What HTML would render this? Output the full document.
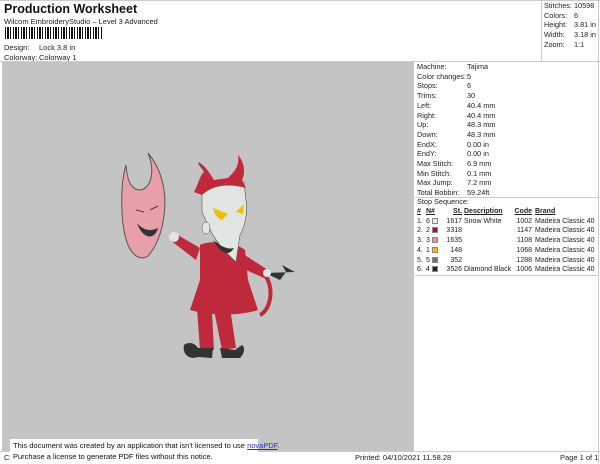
<!DOCTYPE html>
<html><head><style>
*{margin:0;padding:0;box-sizing:border-box}
body{width:600px;height:464px;background:#fff;font-family:"Liberation Sans",Arial,sans-serif;font-size:7.5px;color:#222;position:relative;overflow:hidden}
.a{position:absolute;white-space:nowrap}
.gray{position:absolute;left:2px;top:62px;width:412px;height:390px;background:#c4c4c4}
.bc{position:absolute;left:5px;top:27px;width:97px;height:12px;background:repeating-linear-gradient(90deg,#111 0 1px,#fff 1px 2px,#111 2px 4px,#fff 4px 5px,#111 5px 6px,#fff 6px 8px)}
table{border-collapse:collapse}
td{padding:0;height:9.7px;line-height:9.7px;font-size:7.3px;white-space:nowrap}
.ss td{font-size:7px}
.sw{display:inline-block;width:6px;height:6px;border:1px solid #888;vertical-align:-1px}
</style></head><body>
<div style="position:absolute;left:0;top:0;width:600px;height:1px;background:#ccc"></div>
<div class="a" style="left:4px;top:2px;font-size:12.5px;font-weight:bold;color:#111">Production Worksheet</div>
<div class="a" style="left:4px;top:17px">Wilcom EmbroideryStudio – Level 3 Advanced</div>
<div class="bc"></div>
<div class="a" style="left:4px;top:43px">Design:</div><div class="a" style="left:39px;top:43px">Lock 3.8 in</div>
<div class="a" style="left:4px;top:53px">Colorway:</div><div class="a" style="left:39px;top:53px">Colorway 1</div>
<div style="position:absolute;left:541px;top:1px;width:1px;height:60px;background:#ccc"></div>
<div style="position:absolute;left:598px;top:1px;width:1px;height:462px;background:#ccc"></div>
<table class="a" style="left:544px;top:1px"><tr><td style="width:30px">Stitches:</td><td>10598</td></tr><tr><td>Colors:</td><td>6</td></tr><tr><td>Height:</td><td>3.81 in</td></tr><tr><td>Width:</td><td>3.18 in</td></tr><tr><td>Zoom:</td><td>1:1</td></tr></table>
<div style="position:absolute;left:0;top:61px;width:600px;height:1px;background:#ccc"></div>
<div class="gray"></div>
<table class="a" style="left:417px;top:62px">
<tr><td style="width:50px">Machine:</td><td>Tajima</td></tr>
<tr><td>Color changes:</td><td>5</td></tr><tr><td>Stops:</td><td>6</td></tr><tr><td>Trims:</td><td>30</td></tr>
<tr><td>Left:</td><td>40.4 mm</td></tr><tr><td>Right:</td><td>40.4 mm</td></tr><tr><td>Up:</td><td>48.3 mm</td></tr><tr><td>Down:</td><td>48.3 mm</td></tr>
<tr><td>EndX:</td><td>0.00 in</td></tr><tr><td>EndY:</td><td>0.00 in</td></tr><tr><td>Max Stitch:</td><td>6.9 mm</td></tr><tr><td>Min Stitch:</td><td>0.1 mm</td></tr><tr><td>Max Jump:</td><td>7.2 mm</td></tr><tr><td>Total Bobbin:</td><td>59.24ft</td></tr>
</table>
<div style="position:absolute;left:415px;top:197px;width:183px;height:1px;background:#ccc"></div>
<div class="a" style="left:417px;top:197px;font-size:7.3px">Stop Sequence:</div>
<table class="a ss" style="left:417px;top:207px">
<tr style="font-weight:bold"><td style="width:9px"><u>#</u></td><td style="width:17px"><u>N#</u></td><td style="width:19px;text-align:right"><u>St.</u></td><td style="width:50px;padding-left:2px"><u>Description</u></td><td style="width:20px;text-align:right"><u>Code</u></td><td style="padding-left:3px"><u>Brand</u></td></tr>
<tr><td>1.</td><td>6 <span class="sw" style="background:#eeeef8"></span></td><td style="text-align:right">1617</td><td style="padding-left:2px">Snow White</td><td style="text-align:right">1002</td><td style="padding-left:3px">Madeira Classic 40</td></tr>
<tr><td>2.</td><td>2 <span class="sw" style="background:#b01030"></span></td><td style="text-align:right">3318</td><td></td><td style="text-align:right">1147</td><td style="padding-left:3px">Madeira Classic 40</td></tr>
<tr><td>3.</td><td>3 <span class="sw" style="background:#e890a8"></span></td><td style="text-align:right">1635</td><td></td><td style="text-align:right">1108</td><td style="padding-left:3px">Madeira Classic 40</td></tr>
<tr><td>4.</td><td>1 <span class="sw" style="background:#f8b800"></span></td><td style="text-align:right">148</td><td></td><td style="text-align:right">1068</td><td style="padding-left:3px">Madeira Classic 40</td></tr>
<tr><td>5.</td><td>5 <span class="sw" style="background:#707070"></span></td><td style="text-align:right">352</td><td></td><td style="text-align:right">1288</td><td style="padding-left:3px">Madeira Classic 40</td></tr>
<tr><td>6.</td><td>4 <span class="sw" style="background:#222"></span></td><td style="text-align:right">3526</td><td style="padding-left:2px">Diamond Black</td><td style="text-align:right">1006</td><td style="padding-left:3px">Madeira Classic 40</td></tr>
</table>
<div style="position:absolute;left:415px;top:275px;width:183px;height:1px;background:#ccc"></div>
<svg class="a" style="left:110px;top:140px" width="200" height="240" viewBox="0 0 200 240">
<path d="M16,25 C10,45 10,85 18,105 C24,118 32,120 38,116 C48,105 55,85 55,60 C54,40 48,25 38,13 C45,30 42,48 30,50 C20,50 17,38 16,25Z" fill="#e8a0a8" stroke="#555" stroke-width="1"/>
<path d="M27,83 C33,100 45,100 48,88 C40,92 33,90 27,83Z" fill="#333"/>
<path d="M26,70 L34,72 M40,70 L48,66" stroke="#444" stroke-width="1"/>
<path d="M150,175 C160,170 165,150 155,135" stroke="#c0283c" stroke-width="4" fill="none"/>
<path d="M155,133 L185,132 L172,125 L176,132 L170,140Z" fill="#333"/>
<path d="M90,108 L66,94 L60,100 L86,120Z" fill="#c0283c"/>
<ellipse cx="64" cy="97" rx="5" ry="5" fill="#e0e6e2"/>
<path d="M130,112 L158,130 L154,138 L125,125Z" fill="#c0283c"/>
<ellipse cx="157" cy="133" rx="4" ry="4" fill="#e0e6e2"/>
<path d="M87,168 L90,210 L104,210 L102,172Z M104,170 L112,210 L126,208 L120,168Z" fill="#c0283c"/>
<path d="M90,105 C100,100 125,102 135,110 L138,140 L148,170 C130,176 100,176 80,170 L90,140Z" fill="#c0283c"/>
<path d="M74,205 C72,215 80,220 88,217 L102,218 L103,208 L88,208 C84,202 78,202 74,205Z" fill="#333"/>
<path d="M110,208 L112,218 L130,218 C134,214 136,208 132,205 L125,210Z" fill="#333"/>
<path d="M92,52 C100,40 118,38 134,42 L136,60 C138,75 134,88 130,95 L126,122 C115,112 104,100 98,85 L92,72Z" fill="#e0e6e2" stroke="#555" stroke-width="0.6"/>
<ellipse cx="96" cy="88" rx="4" ry="6" fill="#e0e6e2" stroke="#555" stroke-width="0.5"/>
<path d="M84,52 C88,45 90,35 94,32 C92,28 88,25 88,22 C96,26 100,34 104,40 L118,38 C124,32 130,26 128,15 C134,22 136,32 132,40 L136,48 C120,44 104,44 92,55Z" fill="#c0283c"/>
<path d="M103,68 L118,74 L112,80 C106,78 104,72 103,68Z M126,72 L134,64 L133,74Z" fill="#f0c000"/>
<path d="M103,100 C110,112 118,118 124,108 C118,110 110,106 103,100Z" fill="#333"/>
</svg>
<div style="position:absolute;left:0;top:451px;width:600px;height:1px;background:#ccc"></div>
<div class="a" style="left:4px;top:453px">Cr</div>
<div class="a" style="left:355px;top:453px">Printed: 04/10/2021 11.58.28</div>
<div class="a" style="left:560px;top:453px">Page 1 of 1</div>
<div class="a" style="left:10px;top:439px;width:248px;height:25px;background:#fff;padding:1px 3px;font-size:7.5px;line-height:11px;color:#111">This document was created by an application that isn't licensed to use <span style="color:#2233cc;text-decoration:underline">novaPDF</span>.<br>Purchase a license to generate PDF files without this notice.</div>
</body></html>
